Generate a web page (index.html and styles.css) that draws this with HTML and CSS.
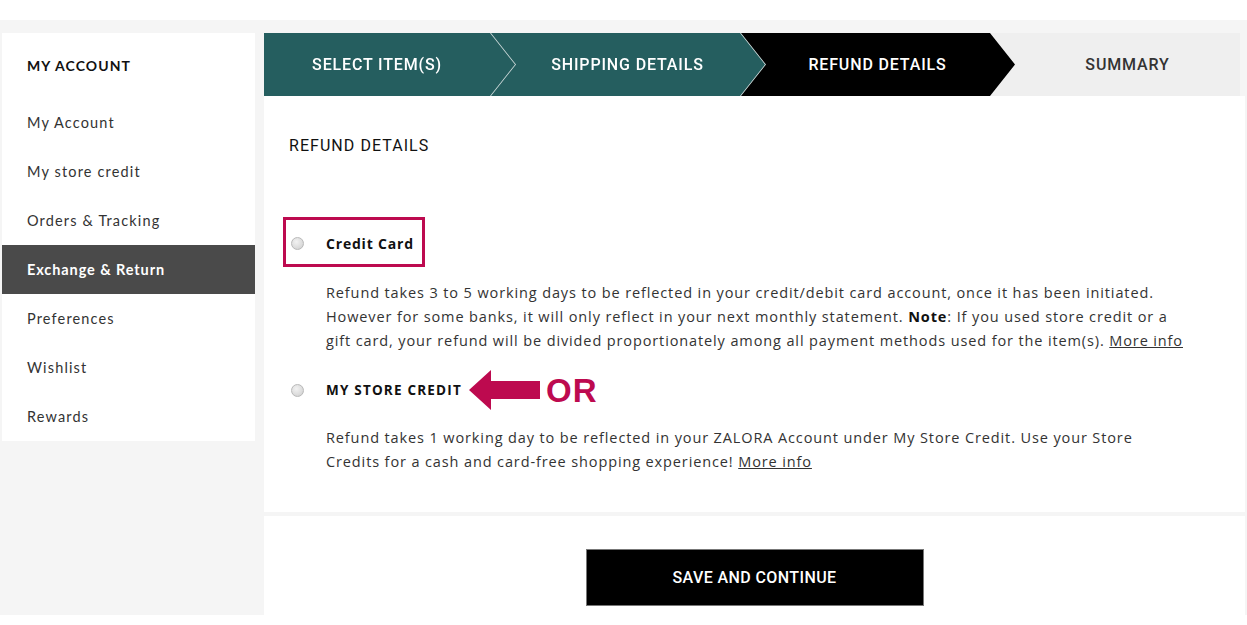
FILE: index.html
```html
<!DOCTYPE html>
<html lang="en">
<head>
<meta charset="utf-8">
<title>Refund Details</title>
<link rel="stylesheet" href="styles.css">
</head>
<body>
<div class="page">
  <div class="layout">
    <aside class="sidebar">
      <div class="side-title">MY ACCOUNT</div>
      <ul class="side-nav">
        <li class="side-item">My Account</li>
        <li class="side-item">My store credit</li>
        <li class="side-item">Orders &amp; Tracking</li>
        <li class="side-item active">Exchange &amp; Return</li>
        <li class="side-item">Preferences</li>
        <li class="side-item">Wishlist</li>
        <li class="side-item">Rewards</li>
      </ul>
    </aside>
    <main class="main">
      <div class="stepper">
        <div class="step-wrap s1"><div class="step first done">SELECT ITEM(S)</div></div>
        <div class="step-wrap s2"><div class="step done">SHIPPING DETAILS</div></div>
        <div class="step-wrap s3"><div class="step current">REFUND DETAILS</div></div>
        <div class="step-wrap s4"><div class="step last">SUMMARY</div></div>
      </div>
      <section class="panel">
        <h2 class="panel-title">REFUND DETAILS</h2>
        <div class="options">
          <div class="opt-head highlighted">
            <span class="radio"></span>
            <span class="opt-label">Credit Card</span>
          </div>
          <p class="opt-desc">Refund takes 3 to 5 working days to be reflected in your credit/debit card account, once it has been initiated. However for some banks, it will only reflect in your next monthly statement. <b>Note</b>: If you used store credit or a gift card, your refund will be divided proportionately among all payment methods used for the item(s). <a class="more">More info</a></p>
          <div class="opt-head second">
            <span class="radio"></span>
            <span class="opt-label caps">MY STORE CREDIT</span>
            <svg class="arrow" width="71" height="40" viewBox="0 0 71 40"><polygon points="0,20 22,0 22,11 71,11 71,29 22,29 22,40" fill="#bd0a4f"/></svg>
            <span class="or">OR</span>
          </div>
          <p class="opt-desc second-desc">Refund takes 1 working day to be reflected in your ZALORA Account under My Store Credit. Use your Store Credits for a cash and card-free shopping experience! <a class="more">More info</a></p>
        </div>
      </section>
      <section class="actions">
        <button class="save-btn">SAVE AND CONTINUE</button>
      </section>
    </main>
  </div>
</div>
</body>
</html>
```
FILE: styles.css
```css
* { box-sizing: border-box; }
html, body { margin: 0; padding: 0; background: #fff; }
body { font-family: "Lato", "Liberation Sans", sans-serif; color: #333; }

.page { padding-top: 20px; }
.layout {
  background: #f5f5f5;
  height: 595px;
  padding: 13px 2px 0 2px;
  display: flex;
  align-items: flex-start;
  gap: 9px;
}

/* Sidebar */
.sidebar { width: 253px; background: #fff; flex: 0 0 253px; }
.side-title {
  height: 65px;
  display: flex; align-items: center;
  padding-left: 25px;
  font-weight: 700; font-size: 14px; letter-spacing: 1.1px; color: #111;
}
.side-nav { list-style: none; margin: 0; padding: 0; }
.side-item {
  height: 49px; display: flex; align-items: center;
  padding-left: 25px;
  font-size: 14.5px; letter-spacing: 1.15px; color: #333;
}
.side-item.active { background: #4a4a4a; color: #fff; font-weight: 700; letter-spacing: 0.9px; }

/* Main */
.main { flex: 0 0 981px; width: 981px; display: flex; flex-direction: column; }

.stepper { display: flex; height: 63px; width: 976px; background: #efefef; }
.step-wrap { position: relative; height: 63px; filter: drop-shadow(1.5px 0 0 #d3dede); }
.step-wrap.s1 { width: 251px; z-index: 4; margin-right: -25px; }
.step-wrap.s2 { width: 275px; z-index: 3; margin-right: -25px; }
.step-wrap.s3 { width: 275px; z-index: 2; margin-right: -25px; filter: none; }
.step-wrap.s4 { width: 250px; z-index: 1; filter: none; }
.step {
  height: 63px; width: 100%;
  display: flex; align-items: center; justify-content: center;
  font-family: "Roboto", "Liberation Sans", sans-serif;
  font-weight: 500; font-size: 16px; letter-spacing: 0.85px;
  padding: 0 25px 1px;
  clip-path: polygon(0 0, calc(100% - 25px) 0, 100% 50%, calc(100% - 25px) 100%, 0 100%, 25px 50%);
}
.step.first { padding-left: 0; clip-path: polygon(0 0, calc(100% - 25px) 0, 100% 50%, calc(100% - 25px) 100%, 0 100%); }
.step.last { padding-right: 0; clip-path: none; }
.step.done { background: #255e5f; color: #fff; }
.step.current { background: #000; color: #fff; }
.step.last { background: #efefef; color: #333; }

.panel { background: #fff; padding: 38px 25px 38px 19px; }
.panel-title {
  margin: 0 0 59px 6px;
  font-family: "Roboto", "Liberation Sans", sans-serif;
  font-weight: 400; font-size: 16px; letter-spacing: 1.05px; line-height: 24px; color: #111;
}
.options { display: flex; flex-direction: column; align-items: flex-start; }
.opt-head {
  display: inline-flex; align-items: center;
  height: 50px;
  border: 3px solid transparent;
  padding: 3px 8px 0 5px;
}
.opt-head.highlighted { border-color: #bd0a4f; }
.opt-head.second { margin-top: 12px; padding-top: 0; }
.radio {
  width: 13px; height: 13px; border-radius: 50%;
  border: 1px solid #b9b9b9;
  background: radial-gradient(circle at 40% 35%, #f2f2f2 0%, #dcdcdc 60%, #cbcbcb 100%);
  margin-right: 22px;
  flex: 0 0 13px;
}
.opt-label {
  font-family: "Open Sans", "Lato", sans-serif;
  font-weight: 700; font-size: 14px; letter-spacing: 0.8px; color: #111;
}
.opt-label.caps { font-size: 13.5px; letter-spacing: 1.2px; }
.arrow { margin-left: 7px; display: block; }
.or {
  margin-left: 6px;
  font-family: "Liberation Sans", Arial, sans-serif;
  font-weight: 700; font-size: 33px; letter-spacing: 1px; color: #bd0a4f; line-height: 1;
}
.opt-desc {
  margin: 14px 0 0 43px;
  width: 864px;
  font-family: "Open Sans", "Lato", sans-serif;
  font-size: 14.5px; line-height: 24px; letter-spacing: 0.88px; color: #333;
}
.opt-desc.second-desc { margin-top: 11px; }
.opt-desc b { color: #111; }
.more { color: #333; text-decoration: underline; }

.actions {
  margin-top: 4px;
  background: #fff;
  height: 99px;
  display: flex; justify-content: center; align-items: flex-start;
  padding-top: 33px;
}
.save-btn {
  width: 338px; height: 57px;
  background: #000; color: #fff;
  border: 1px solid #777;
  font-family: "Roboto", "Liberation Sans", sans-serif;
  font-weight: 500; font-size: 16px; letter-spacing: 0.4px;
}
```
